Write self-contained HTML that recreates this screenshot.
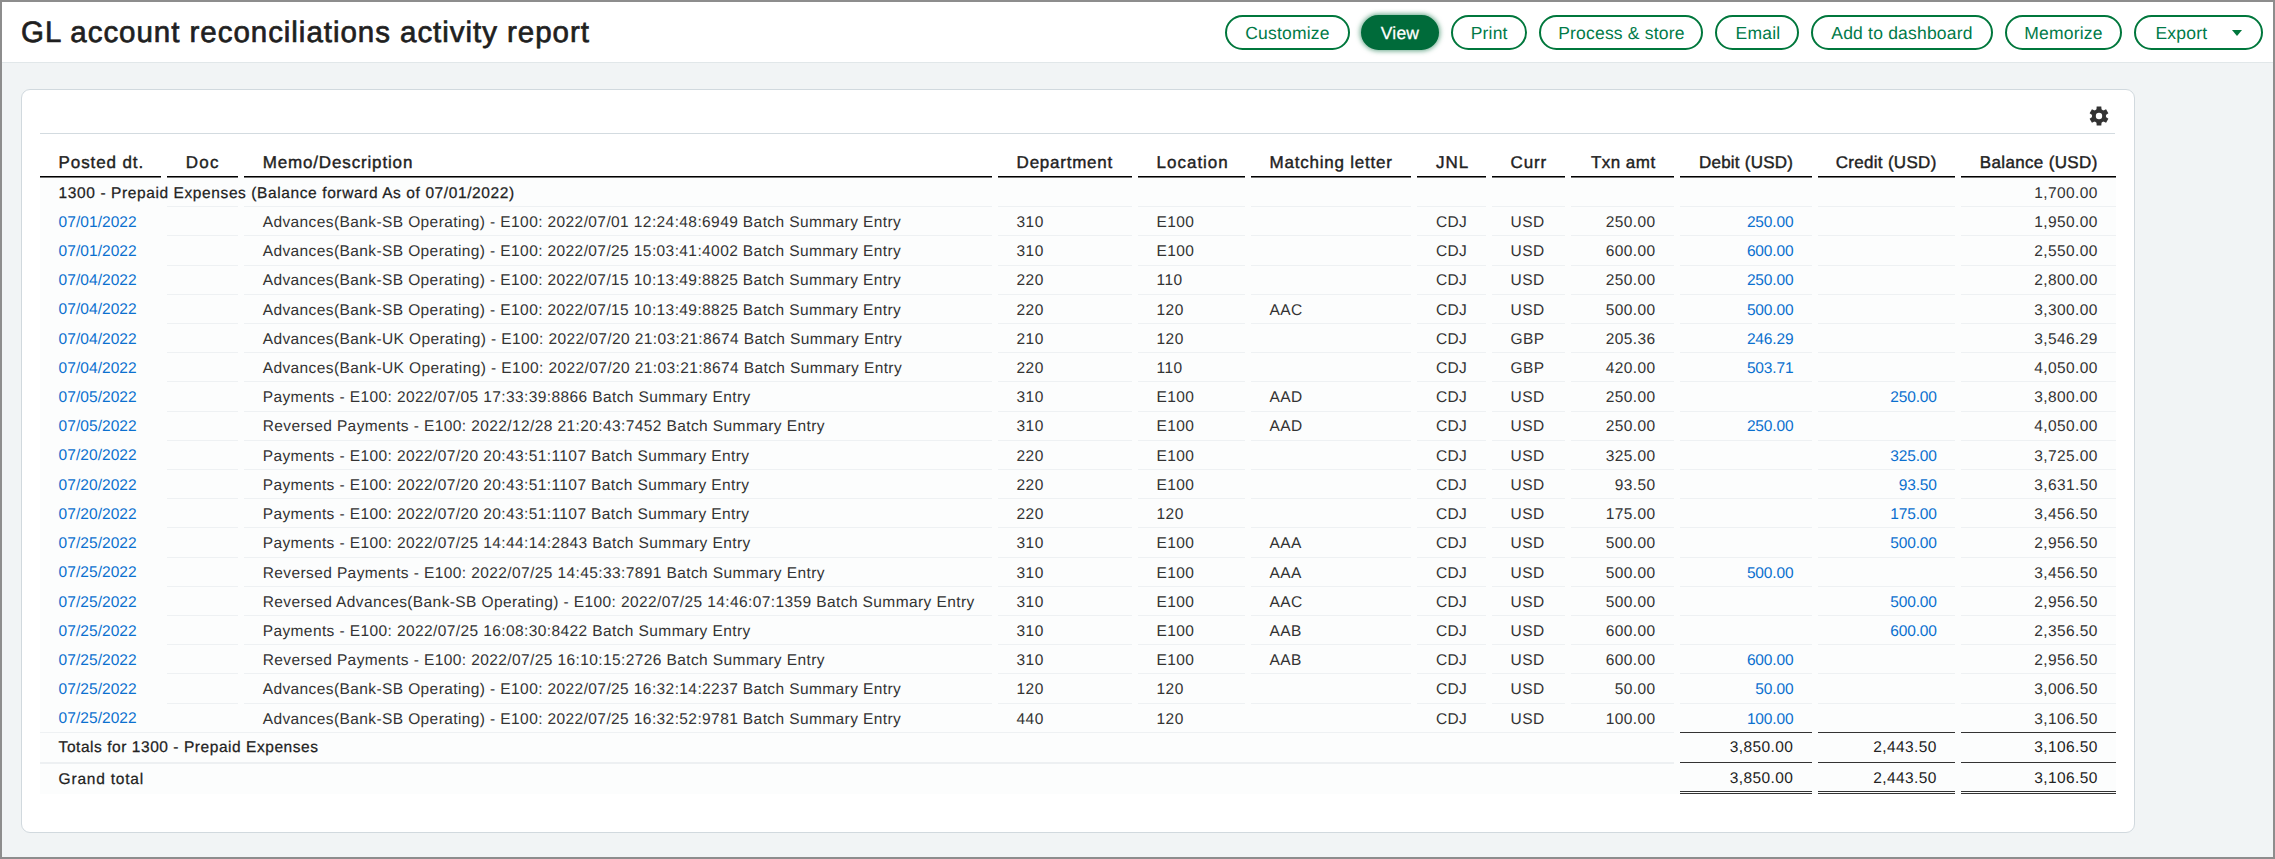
<!DOCTYPE html>
<html><head><meta charset="utf-8">
<style>
*{box-sizing:border-box;margin:0;padding:0}
html,body{width:2275px;height:859px;overflow:hidden;background:#f1f4f5;font-family:"Liberation Sans",sans-serif;text-rendering:geometricPrecision}
#frame{position:absolute;left:0;top:0;width:2275px;height:859px;border:2px solid #8d8d8d;pointer-events:none;z-index:10}
#hdr{position:absolute;left:0;top:0;width:2275px;height:63px;background:#fff;border-bottom:1px solid #e1e7e9}
#title{position:absolute;left:21px;top:15.6px;font-size:29.5px;font-weight:400;-webkit-text-stroke:0.7px #1f1f1f;letter-spacing:0.96px;color:#1f1f1f;white-space:nowrap;line-height:34px}
.btn{position:absolute;top:15px;height:35px;border:2px solid #00773c;border-radius:17.5px;color:#007a48;font-size:17.5px;line-height:33px;text-align:center;white-space:nowrap;background:#fff;letter-spacing:0.2px}
.btn.pri{background:#006b3a;border-color:#006b3a;color:#fff;-webkit-text-stroke:0.25px #fff;box-shadow:0 0 5px 1px rgba(0,107,58,.6)}
#card{position:absolute;left:21px;top:89px;width:2114px;height:744px;background:#fff;border:1px solid #d1d9de;border-radius:9px}
#topline{position:absolute;left:40px;top:133px;width:2075px;height:1px;background:#d3dbe0}
.a{position:absolute;white-space:nowrap}
.th{font-size:17px;font-weight:400;color:#222;-webkit-text-stroke:0.4px #222;top:152.6px;line-height:20px}
.ul{position:absolute;top:176px;height:1px;background:#000;box-shadow:0 1px 0 rgba(0,0,0,0.55)}
.bg{position:absolute;background:#fcfdfd}
.sep{position:absolute;height:1px;background:#eef1f3}
.td{font-size:15.5px;color:#333;line-height:17px;letter-spacing:0.4px}
.dt{letter-spacing:-0.15px}
.lk{color:#0b70cf}
.bold{color:#222;-webkit-text-stroke:0.25px #222;letter-spacing:0.6px}
.tl{position:absolute;height:1px;background:#333}
.tot{color:#222}
</style></head><body>
<div id="hdr"></div>
<div id="title">GL account reconciliations activity report</div>
<div class="btn" style="left:1225px;width:125.0px;">Customize</div>
<div class="btn pri" style="left:1361px;width:78.0px;">View</div>
<div class="btn" style="left:1451.4px;width:75.6px;">Print</div>
<div class="btn" style="left:1539.4px;width:164.1px;">Process &amp; store</div>
<div class="btn" style="left:1715px;width:84.0px;padding-left:2px;">Email</div>
<div class="btn" style="left:1811px;width:182.0px;">Add to dashboard</div>
<div class="btn" style="left:2005px;width:117.0px;">Memorize</div>
<div class="btn" style="left:2134px;width:128.5999999999999px;text-align:left;padding-left:19.5px">Export<span style="position:absolute;left:95.5px;top:13.1px;width:0;height:0;border-left:5.5px solid transparent;border-right:5.5px solid transparent;border-top:6.3px solid #00773c"></span></div>
<div id="card"></div>
<div id="topline"></div>
<svg class="a" style="left:2088.9px;top:105.8px" width="20" height="20" viewBox="-10 -10 20 20"><g fill="#333"><path transform="rotate(0)" d="M-2.3,-9.5 L2.3,-9.5 L2.6,-6 L-2.6,-6 Z"/><path transform="rotate(60)" d="M-2.3,-9.5 L2.3,-9.5 L2.6,-6 L-2.6,-6 Z"/><path transform="rotate(120)" d="M-2.3,-9.5 L2.3,-9.5 L2.6,-6 L-2.6,-6 Z"/><path transform="rotate(180)" d="M-2.3,-9.5 L2.3,-9.5 L2.6,-6 L-2.6,-6 Z"/><path transform="rotate(240)" d="M-2.3,-9.5 L2.3,-9.5 L2.6,-6 L-2.6,-6 Z"/><path transform="rotate(300)" d="M-2.3,-9.5 L2.3,-9.5 L2.6,-6 L-2.6,-6 Z"/><circle r="7.1"/></g><circle r="3.2" fill="#fff"/></svg>
<div class="a th" style="left:58.6px;letter-spacing:0.89px">Posted dt.</div>
<div class="ul" style="left:40px;width:121.00px"></div>
<div class="a th" style="left:185.79999999999998px;letter-spacing:1.2px">Doc</div>
<div class="ul" style="left:167.2px;width:70.60px"></div>
<div class="a th" style="left:262.65000000000003px;letter-spacing:0.85px">Memo/Description</div>
<div class="ul" style="left:244.05px;width:747.95px"></div>
<div class="a th" style="left:1016.6px;letter-spacing:0.76px">Department</div>
<div class="ul" style="left:998px;width:134.00px"></div>
<div class="a th" style="left:1156.6px;letter-spacing:0.98px">Location</div>
<div class="ul" style="left:1138px;width:106.70px"></div>
<div class="a th" style="left:1269.6px;letter-spacing:0.77px">Matching letter</div>
<div class="ul" style="left:1251px;width:160.00px"></div>
<div class="a th" style="left:1435.8999999999999px;letter-spacing:1.0px">JNL</div>
<div class="ul" style="left:1417.3px;width:68.70px"></div>
<div class="a th" style="left:1510.6px;letter-spacing:0.85px">Curr</div>
<div class="ul" style="left:1492px;width:72.70px"></div>
<div class="a th" style="right:619.45px;letter-spacing:0.45px">Txn amt</div>
<div class="ul" style="left:1571px;width:102.80px"></div>
<div class="a th" style="right:481.87px;letter-spacing:0.23px">Debit (USD)</div>
<div class="ul" style="left:1680px;width:131.60px"></div>
<div class="a th" style="right:338.40px;letter-spacing:0.3px">Credit (USD)</div>
<div class="ul" style="left:1818px;width:137.00px"></div>
<div class="a th" style="right:177.36px;letter-spacing:0.34px">Balance (USD)</div>
<div class="ul" style="left:1961px;width:155.00px"></div>
<div class="bg" style="left:40px;top:177.5px;width:2076px;height:616.0px"></div>
<div class="a td bold" style="left:58.60px;top:185.00px;">1300 - Prepaid Expenses (Balance forward As of 07/01/2022)</div>
<div class="a td" style="right:177.30px;top:185.00px;">1,700.00</div>
<div class="sep" style="left:167.2px;top:206px;width:70.60px"></div>
<div class="sep" style="left:244.05px;top:206px;width:747.95px"></div>
<div class="sep" style="left:998px;top:206px;width:134.00px"></div>
<div class="sep" style="left:1138px;top:206px;width:106.70px"></div>
<div class="sep" style="left:1251px;top:206px;width:160.00px"></div>
<div class="sep" style="left:1417.3px;top:206px;width:68.70px"></div>
<div class="sep" style="left:1492px;top:206px;width:72.70px"></div>
<div class="sep" style="left:1571px;top:206px;width:102.80px"></div>
<div class="sep" style="left:1680px;top:206px;width:131.60px"></div>
<div class="sep" style="left:1818px;top:206px;width:137.00px"></div>
<div class="sep" style="left:1961px;top:206px;width:155.00px"></div>
<div class="a td lk" style="left:58.60px;top:213.80px;letter-spacing:0.05px">07/01/2022</div>
<div class="a td" style="left:262.65px;top:214.00px;">Advances(Bank-SB Operating) - E100: 2022/07/01 12:24:48:6949 Batch Summary Entry</div>
<div class="a td" style="left:1016.60px;top:214.00px;">310</div>
<div class="a td" style="left:1156.60px;top:214.00px;">E100</div>
<div class="a td" style="left:1435.90px;top:214.00px;">CDJ</div>
<div class="a td" style="left:1510.60px;top:214.00px;">USD</div>
<div class="a td" style="right:619.50px;top:214.00px;">250.00</div>
<div class="a td lk dt" style="right:481.60px;top:214.00px;">250.00</div>
<div class="a td" style="right:177.30px;top:214.00px;">1,950.00</div>
<div class="sep" style="left:167.2px;top:235px;width:70.60px"></div>
<div class="sep" style="left:244.05px;top:235px;width:747.95px"></div>
<div class="sep" style="left:998px;top:235px;width:134.00px"></div>
<div class="sep" style="left:1138px;top:235px;width:106.70px"></div>
<div class="sep" style="left:1251px;top:235px;width:160.00px"></div>
<div class="sep" style="left:1417.3px;top:235px;width:68.70px"></div>
<div class="sep" style="left:1492px;top:235px;width:72.70px"></div>
<div class="sep" style="left:1571px;top:235px;width:102.80px"></div>
<div class="sep" style="left:1680px;top:235px;width:131.60px"></div>
<div class="sep" style="left:1818px;top:235px;width:137.00px"></div>
<div class="sep" style="left:1961px;top:235px;width:155.00px"></div>
<div class="a td lk" style="left:58.60px;top:243.01px;letter-spacing:0.05px">07/01/2022</div>
<div class="a td" style="left:262.65px;top:243.21px;">Advances(Bank-SB Operating) - E100: 2022/07/25 15:03:41:4002 Batch Summary Entry</div>
<div class="a td" style="left:1016.60px;top:243.21px;">310</div>
<div class="a td" style="left:1156.60px;top:243.21px;">E100</div>
<div class="a td" style="left:1435.90px;top:243.21px;">CDJ</div>
<div class="a td" style="left:1510.60px;top:243.21px;">USD</div>
<div class="a td" style="right:619.50px;top:243.21px;">600.00</div>
<div class="a td lk dt" style="right:481.60px;top:243.21px;">600.00</div>
<div class="a td" style="right:177.30px;top:243.21px;">2,550.00</div>
<div class="sep" style="left:167.2px;top:265px;width:70.60px"></div>
<div class="sep" style="left:244.05px;top:265px;width:747.95px"></div>
<div class="sep" style="left:998px;top:265px;width:134.00px"></div>
<div class="sep" style="left:1138px;top:265px;width:106.70px"></div>
<div class="sep" style="left:1251px;top:265px;width:160.00px"></div>
<div class="sep" style="left:1417.3px;top:265px;width:68.70px"></div>
<div class="sep" style="left:1492px;top:265px;width:72.70px"></div>
<div class="sep" style="left:1571px;top:265px;width:102.80px"></div>
<div class="sep" style="left:1680px;top:265px;width:131.60px"></div>
<div class="sep" style="left:1818px;top:265px;width:137.00px"></div>
<div class="sep" style="left:1961px;top:265px;width:155.00px"></div>
<div class="a td lk" style="left:58.60px;top:272.22px;letter-spacing:0.05px">07/04/2022</div>
<div class="a td" style="left:262.65px;top:272.42px;">Advances(Bank-SB Operating) - E100: 2022/07/15 10:13:49:8825 Batch Summary Entry</div>
<div class="a td" style="left:1016.60px;top:272.42px;">220</div>
<div class="a td" style="left:1156.60px;top:272.42px;">110</div>
<div class="a td" style="left:1435.90px;top:272.42px;">CDJ</div>
<div class="a td" style="left:1510.60px;top:272.42px;">USD</div>
<div class="a td" style="right:619.50px;top:272.42px;">250.00</div>
<div class="a td lk dt" style="right:481.60px;top:272.42px;">250.00</div>
<div class="a td" style="right:177.30px;top:272.42px;">2,800.00</div>
<div class="sep" style="left:167.2px;top:294px;width:70.60px"></div>
<div class="sep" style="left:244.05px;top:294px;width:747.95px"></div>
<div class="sep" style="left:998px;top:294px;width:134.00px"></div>
<div class="sep" style="left:1138px;top:294px;width:106.70px"></div>
<div class="sep" style="left:1251px;top:294px;width:160.00px"></div>
<div class="sep" style="left:1417.3px;top:294px;width:68.70px"></div>
<div class="sep" style="left:1492px;top:294px;width:72.70px"></div>
<div class="sep" style="left:1571px;top:294px;width:102.80px"></div>
<div class="sep" style="left:1680px;top:294px;width:131.60px"></div>
<div class="sep" style="left:1818px;top:294px;width:137.00px"></div>
<div class="sep" style="left:1961px;top:294px;width:155.00px"></div>
<div class="a td lk" style="left:58.60px;top:301.43px;letter-spacing:0.05px">07/04/2022</div>
<div class="a td" style="left:262.65px;top:301.63px;">Advances(Bank-SB Operating) - E100: 2022/07/15 10:13:49:8825 Batch Summary Entry</div>
<div class="a td" style="left:1016.60px;top:301.63px;">220</div>
<div class="a td" style="left:1156.60px;top:301.63px;">120</div>
<div class="a td" style="left:1269.60px;top:301.63px;">AAC</div>
<div class="a td" style="left:1435.90px;top:301.63px;">CDJ</div>
<div class="a td" style="left:1510.60px;top:301.63px;">USD</div>
<div class="a td" style="right:619.50px;top:301.63px;">500.00</div>
<div class="a td lk dt" style="right:481.60px;top:301.63px;">500.00</div>
<div class="a td" style="right:177.30px;top:301.63px;">3,300.00</div>
<div class="sep" style="left:167.2px;top:323px;width:70.60px"></div>
<div class="sep" style="left:244.05px;top:323px;width:747.95px"></div>
<div class="sep" style="left:998px;top:323px;width:134.00px"></div>
<div class="sep" style="left:1138px;top:323px;width:106.70px"></div>
<div class="sep" style="left:1251px;top:323px;width:160.00px"></div>
<div class="sep" style="left:1417.3px;top:323px;width:68.70px"></div>
<div class="sep" style="left:1492px;top:323px;width:72.70px"></div>
<div class="sep" style="left:1571px;top:323px;width:102.80px"></div>
<div class="sep" style="left:1680px;top:323px;width:131.60px"></div>
<div class="sep" style="left:1818px;top:323px;width:137.00px"></div>
<div class="sep" style="left:1961px;top:323px;width:155.00px"></div>
<div class="a td lk" style="left:58.60px;top:330.64px;letter-spacing:0.05px">07/04/2022</div>
<div class="a td" style="left:262.65px;top:330.84px;">Advances(Bank-UK Operating) - E100: 2022/07/20 21:03:21:8674 Batch Summary Entry</div>
<div class="a td" style="left:1016.60px;top:330.84px;">210</div>
<div class="a td" style="left:1156.60px;top:330.84px;">120</div>
<div class="a td" style="left:1435.90px;top:330.84px;">CDJ</div>
<div class="a td" style="left:1510.60px;top:330.84px;">GBP</div>
<div class="a td" style="right:619.50px;top:330.84px;">205.36</div>
<div class="a td lk dt" style="right:481.60px;top:330.84px;">246.29</div>
<div class="a td" style="right:177.30px;top:330.84px;">3,546.29</div>
<div class="sep" style="left:167.2px;top:352px;width:70.60px"></div>
<div class="sep" style="left:244.05px;top:352px;width:747.95px"></div>
<div class="sep" style="left:998px;top:352px;width:134.00px"></div>
<div class="sep" style="left:1138px;top:352px;width:106.70px"></div>
<div class="sep" style="left:1251px;top:352px;width:160.00px"></div>
<div class="sep" style="left:1417.3px;top:352px;width:68.70px"></div>
<div class="sep" style="left:1492px;top:352px;width:72.70px"></div>
<div class="sep" style="left:1571px;top:352px;width:102.80px"></div>
<div class="sep" style="left:1680px;top:352px;width:131.60px"></div>
<div class="sep" style="left:1818px;top:352px;width:137.00px"></div>
<div class="sep" style="left:1961px;top:352px;width:155.00px"></div>
<div class="a td lk" style="left:58.60px;top:359.85px;letter-spacing:0.05px">07/04/2022</div>
<div class="a td" style="left:262.65px;top:360.05px;">Advances(Bank-UK Operating) - E100: 2022/07/20 21:03:21:8674 Batch Summary Entry</div>
<div class="a td" style="left:1016.60px;top:360.05px;">220</div>
<div class="a td" style="left:1156.60px;top:360.05px;">110</div>
<div class="a td" style="left:1435.90px;top:360.05px;">CDJ</div>
<div class="a td" style="left:1510.60px;top:360.05px;">GBP</div>
<div class="a td" style="right:619.50px;top:360.05px;">420.00</div>
<div class="a td lk dt" style="right:481.60px;top:360.05px;">503.71</div>
<div class="a td" style="right:177.30px;top:360.05px;">4,050.00</div>
<div class="sep" style="left:167.2px;top:381px;width:70.60px"></div>
<div class="sep" style="left:244.05px;top:381px;width:747.95px"></div>
<div class="sep" style="left:998px;top:381px;width:134.00px"></div>
<div class="sep" style="left:1138px;top:381px;width:106.70px"></div>
<div class="sep" style="left:1251px;top:381px;width:160.00px"></div>
<div class="sep" style="left:1417.3px;top:381px;width:68.70px"></div>
<div class="sep" style="left:1492px;top:381px;width:72.70px"></div>
<div class="sep" style="left:1571px;top:381px;width:102.80px"></div>
<div class="sep" style="left:1680px;top:381px;width:131.60px"></div>
<div class="sep" style="left:1818px;top:381px;width:137.00px"></div>
<div class="sep" style="left:1961px;top:381px;width:155.00px"></div>
<div class="a td lk" style="left:58.60px;top:389.06px;letter-spacing:0.05px">07/05/2022</div>
<div class="a td" style="left:262.65px;top:389.26px;">Payments - E100: 2022/07/05 17:33:39:8866 Batch Summary Entry</div>
<div class="a td" style="left:1016.60px;top:389.26px;">310</div>
<div class="a td" style="left:1156.60px;top:389.26px;">E100</div>
<div class="a td" style="left:1269.60px;top:389.26px;">AAD</div>
<div class="a td" style="left:1435.90px;top:389.26px;">CDJ</div>
<div class="a td" style="left:1510.60px;top:389.26px;">USD</div>
<div class="a td" style="right:619.50px;top:389.26px;">250.00</div>
<div class="a td lk dt" style="right:338.20px;top:389.26px;">250.00</div>
<div class="a td" style="right:177.30px;top:389.26px;">3,800.00</div>
<div class="sep" style="left:167.2px;top:411px;width:70.60px"></div>
<div class="sep" style="left:244.05px;top:411px;width:747.95px"></div>
<div class="sep" style="left:998px;top:411px;width:134.00px"></div>
<div class="sep" style="left:1138px;top:411px;width:106.70px"></div>
<div class="sep" style="left:1251px;top:411px;width:160.00px"></div>
<div class="sep" style="left:1417.3px;top:411px;width:68.70px"></div>
<div class="sep" style="left:1492px;top:411px;width:72.70px"></div>
<div class="sep" style="left:1571px;top:411px;width:102.80px"></div>
<div class="sep" style="left:1680px;top:411px;width:131.60px"></div>
<div class="sep" style="left:1818px;top:411px;width:137.00px"></div>
<div class="sep" style="left:1961px;top:411px;width:155.00px"></div>
<div class="a td lk" style="left:58.60px;top:418.27px;letter-spacing:0.05px">07/05/2022</div>
<div class="a td" style="left:262.65px;top:418.47px;">Reversed Payments - E100: 2022/12/28 21:20:43:7452 Batch Summary Entry</div>
<div class="a td" style="left:1016.60px;top:418.47px;">310</div>
<div class="a td" style="left:1156.60px;top:418.47px;">E100</div>
<div class="a td" style="left:1269.60px;top:418.47px;">AAD</div>
<div class="a td" style="left:1435.90px;top:418.47px;">CDJ</div>
<div class="a td" style="left:1510.60px;top:418.47px;">USD</div>
<div class="a td" style="right:619.50px;top:418.47px;">250.00</div>
<div class="a td lk dt" style="right:481.60px;top:418.47px;">250.00</div>
<div class="a td" style="right:177.30px;top:418.47px;">4,050.00</div>
<div class="sep" style="left:167.2px;top:440px;width:70.60px"></div>
<div class="sep" style="left:244.05px;top:440px;width:747.95px"></div>
<div class="sep" style="left:998px;top:440px;width:134.00px"></div>
<div class="sep" style="left:1138px;top:440px;width:106.70px"></div>
<div class="sep" style="left:1251px;top:440px;width:160.00px"></div>
<div class="sep" style="left:1417.3px;top:440px;width:68.70px"></div>
<div class="sep" style="left:1492px;top:440px;width:72.70px"></div>
<div class="sep" style="left:1571px;top:440px;width:102.80px"></div>
<div class="sep" style="left:1680px;top:440px;width:131.60px"></div>
<div class="sep" style="left:1818px;top:440px;width:137.00px"></div>
<div class="sep" style="left:1961px;top:440px;width:155.00px"></div>
<div class="a td lk" style="left:58.60px;top:447.48px;letter-spacing:0.05px">07/20/2022</div>
<div class="a td" style="left:262.65px;top:447.68px;">Payments - E100: 2022/07/20 20:43:51:1107 Batch Summary Entry</div>
<div class="a td" style="left:1016.60px;top:447.68px;">220</div>
<div class="a td" style="left:1156.60px;top:447.68px;">E100</div>
<div class="a td" style="left:1435.90px;top:447.68px;">CDJ</div>
<div class="a td" style="left:1510.60px;top:447.68px;">USD</div>
<div class="a td" style="right:619.50px;top:447.68px;">325.00</div>
<div class="a td lk dt" style="right:338.20px;top:447.68px;">325.00</div>
<div class="a td" style="right:177.30px;top:447.68px;">3,725.00</div>
<div class="sep" style="left:167.2px;top:469px;width:70.60px"></div>
<div class="sep" style="left:244.05px;top:469px;width:747.95px"></div>
<div class="sep" style="left:998px;top:469px;width:134.00px"></div>
<div class="sep" style="left:1138px;top:469px;width:106.70px"></div>
<div class="sep" style="left:1251px;top:469px;width:160.00px"></div>
<div class="sep" style="left:1417.3px;top:469px;width:68.70px"></div>
<div class="sep" style="left:1492px;top:469px;width:72.70px"></div>
<div class="sep" style="left:1571px;top:469px;width:102.80px"></div>
<div class="sep" style="left:1680px;top:469px;width:131.60px"></div>
<div class="sep" style="left:1818px;top:469px;width:137.00px"></div>
<div class="sep" style="left:1961px;top:469px;width:155.00px"></div>
<div class="a td lk" style="left:58.60px;top:476.69px;letter-spacing:0.05px">07/20/2022</div>
<div class="a td" style="left:262.65px;top:476.89px;">Payments - E100: 2022/07/20 20:43:51:1107 Batch Summary Entry</div>
<div class="a td" style="left:1016.60px;top:476.89px;">220</div>
<div class="a td" style="left:1156.60px;top:476.89px;">E100</div>
<div class="a td" style="left:1435.90px;top:476.89px;">CDJ</div>
<div class="a td" style="left:1510.60px;top:476.89px;">USD</div>
<div class="a td" style="right:619.50px;top:476.89px;">93.50</div>
<div class="a td lk dt" style="right:338.20px;top:476.89px;">93.50</div>
<div class="a td" style="right:177.30px;top:476.89px;">3,631.50</div>
<div class="sep" style="left:167.2px;top:498px;width:70.60px"></div>
<div class="sep" style="left:244.05px;top:498px;width:747.95px"></div>
<div class="sep" style="left:998px;top:498px;width:134.00px"></div>
<div class="sep" style="left:1138px;top:498px;width:106.70px"></div>
<div class="sep" style="left:1251px;top:498px;width:160.00px"></div>
<div class="sep" style="left:1417.3px;top:498px;width:68.70px"></div>
<div class="sep" style="left:1492px;top:498px;width:72.70px"></div>
<div class="sep" style="left:1571px;top:498px;width:102.80px"></div>
<div class="sep" style="left:1680px;top:498px;width:131.60px"></div>
<div class="sep" style="left:1818px;top:498px;width:137.00px"></div>
<div class="sep" style="left:1961px;top:498px;width:155.00px"></div>
<div class="a td lk" style="left:58.60px;top:505.90px;letter-spacing:0.05px">07/20/2022</div>
<div class="a td" style="left:262.65px;top:506.10px;">Payments - E100: 2022/07/20 20:43:51:1107 Batch Summary Entry</div>
<div class="a td" style="left:1016.60px;top:506.10px;">220</div>
<div class="a td" style="left:1156.60px;top:506.10px;">120</div>
<div class="a td" style="left:1435.90px;top:506.10px;">CDJ</div>
<div class="a td" style="left:1510.60px;top:506.10px;">USD</div>
<div class="a td" style="right:619.50px;top:506.10px;">175.00</div>
<div class="a td lk dt" style="right:338.20px;top:506.10px;">175.00</div>
<div class="a td" style="right:177.30px;top:506.10px;">3,456.50</div>
<div class="sep" style="left:167.2px;top:527px;width:70.60px"></div>
<div class="sep" style="left:244.05px;top:527px;width:747.95px"></div>
<div class="sep" style="left:998px;top:527px;width:134.00px"></div>
<div class="sep" style="left:1138px;top:527px;width:106.70px"></div>
<div class="sep" style="left:1251px;top:527px;width:160.00px"></div>
<div class="sep" style="left:1417.3px;top:527px;width:68.70px"></div>
<div class="sep" style="left:1492px;top:527px;width:72.70px"></div>
<div class="sep" style="left:1571px;top:527px;width:102.80px"></div>
<div class="sep" style="left:1680px;top:527px;width:131.60px"></div>
<div class="sep" style="left:1818px;top:527px;width:137.00px"></div>
<div class="sep" style="left:1961px;top:527px;width:155.00px"></div>
<div class="a td lk" style="left:58.60px;top:535.11px;letter-spacing:0.05px">07/25/2022</div>
<div class="a td" style="left:262.65px;top:535.31px;">Payments - E100: 2022/07/25 14:44:14:2843 Batch Summary Entry</div>
<div class="a td" style="left:1016.60px;top:535.31px;">310</div>
<div class="a td" style="left:1156.60px;top:535.31px;">E100</div>
<div class="a td" style="left:1269.60px;top:535.31px;">AAA</div>
<div class="a td" style="left:1435.90px;top:535.31px;">CDJ</div>
<div class="a td" style="left:1510.60px;top:535.31px;">USD</div>
<div class="a td" style="right:619.50px;top:535.31px;">500.00</div>
<div class="a td lk dt" style="right:338.20px;top:535.31px;">500.00</div>
<div class="a td" style="right:177.30px;top:535.31px;">2,956.50</div>
<div class="sep" style="left:167.2px;top:557px;width:70.60px"></div>
<div class="sep" style="left:244.05px;top:557px;width:747.95px"></div>
<div class="sep" style="left:998px;top:557px;width:134.00px"></div>
<div class="sep" style="left:1138px;top:557px;width:106.70px"></div>
<div class="sep" style="left:1251px;top:557px;width:160.00px"></div>
<div class="sep" style="left:1417.3px;top:557px;width:68.70px"></div>
<div class="sep" style="left:1492px;top:557px;width:72.70px"></div>
<div class="sep" style="left:1571px;top:557px;width:102.80px"></div>
<div class="sep" style="left:1680px;top:557px;width:131.60px"></div>
<div class="sep" style="left:1818px;top:557px;width:137.00px"></div>
<div class="sep" style="left:1961px;top:557px;width:155.00px"></div>
<div class="a td lk" style="left:58.60px;top:564.32px;letter-spacing:0.05px">07/25/2022</div>
<div class="a td" style="left:262.65px;top:564.52px;">Reversed Payments - E100: 2022/07/25 14:45:33:7891 Batch Summary Entry</div>
<div class="a td" style="left:1016.60px;top:564.52px;">310</div>
<div class="a td" style="left:1156.60px;top:564.52px;">E100</div>
<div class="a td" style="left:1269.60px;top:564.52px;">AAA</div>
<div class="a td" style="left:1435.90px;top:564.52px;">CDJ</div>
<div class="a td" style="left:1510.60px;top:564.52px;">USD</div>
<div class="a td" style="right:619.50px;top:564.52px;">500.00</div>
<div class="a td lk dt" style="right:481.60px;top:564.52px;">500.00</div>
<div class="a td" style="right:177.30px;top:564.52px;">3,456.50</div>
<div class="sep" style="left:167.2px;top:586px;width:70.60px"></div>
<div class="sep" style="left:244.05px;top:586px;width:747.95px"></div>
<div class="sep" style="left:998px;top:586px;width:134.00px"></div>
<div class="sep" style="left:1138px;top:586px;width:106.70px"></div>
<div class="sep" style="left:1251px;top:586px;width:160.00px"></div>
<div class="sep" style="left:1417.3px;top:586px;width:68.70px"></div>
<div class="sep" style="left:1492px;top:586px;width:72.70px"></div>
<div class="sep" style="left:1571px;top:586px;width:102.80px"></div>
<div class="sep" style="left:1680px;top:586px;width:131.60px"></div>
<div class="sep" style="left:1818px;top:586px;width:137.00px"></div>
<div class="sep" style="left:1961px;top:586px;width:155.00px"></div>
<div class="a td lk" style="left:58.60px;top:593.53px;letter-spacing:0.05px">07/25/2022</div>
<div class="a td" style="left:262.65px;top:593.73px;">Reversed Advances(Bank-SB Operating) - E100: 2022/07/25 14:46:07:1359 Batch Summary Entry</div>
<div class="a td" style="left:1016.60px;top:593.73px;">310</div>
<div class="a td" style="left:1156.60px;top:593.73px;">E100</div>
<div class="a td" style="left:1269.60px;top:593.73px;">AAC</div>
<div class="a td" style="left:1435.90px;top:593.73px;">CDJ</div>
<div class="a td" style="left:1510.60px;top:593.73px;">USD</div>
<div class="a td" style="right:619.50px;top:593.73px;">500.00</div>
<div class="a td lk dt" style="right:338.20px;top:593.73px;">500.00</div>
<div class="a td" style="right:177.30px;top:593.73px;">2,956.50</div>
<div class="sep" style="left:167.2px;top:615px;width:70.60px"></div>
<div class="sep" style="left:244.05px;top:615px;width:747.95px"></div>
<div class="sep" style="left:998px;top:615px;width:134.00px"></div>
<div class="sep" style="left:1138px;top:615px;width:106.70px"></div>
<div class="sep" style="left:1251px;top:615px;width:160.00px"></div>
<div class="sep" style="left:1417.3px;top:615px;width:68.70px"></div>
<div class="sep" style="left:1492px;top:615px;width:72.70px"></div>
<div class="sep" style="left:1571px;top:615px;width:102.80px"></div>
<div class="sep" style="left:1680px;top:615px;width:131.60px"></div>
<div class="sep" style="left:1818px;top:615px;width:137.00px"></div>
<div class="sep" style="left:1961px;top:615px;width:155.00px"></div>
<div class="a td lk" style="left:58.60px;top:622.74px;letter-spacing:0.05px">07/25/2022</div>
<div class="a td" style="left:262.65px;top:622.94px;">Payments - E100: 2022/07/25 16:08:30:8422 Batch Summary Entry</div>
<div class="a td" style="left:1016.60px;top:622.94px;">310</div>
<div class="a td" style="left:1156.60px;top:622.94px;">E100</div>
<div class="a td" style="left:1269.60px;top:622.94px;">AAB</div>
<div class="a td" style="left:1435.90px;top:622.94px;">CDJ</div>
<div class="a td" style="left:1510.60px;top:622.94px;">USD</div>
<div class="a td" style="right:619.50px;top:622.94px;">600.00</div>
<div class="a td lk dt" style="right:338.20px;top:622.94px;">600.00</div>
<div class="a td" style="right:177.30px;top:622.94px;">2,356.50</div>
<div class="sep" style="left:167.2px;top:644px;width:70.60px"></div>
<div class="sep" style="left:244.05px;top:644px;width:747.95px"></div>
<div class="sep" style="left:998px;top:644px;width:134.00px"></div>
<div class="sep" style="left:1138px;top:644px;width:106.70px"></div>
<div class="sep" style="left:1251px;top:644px;width:160.00px"></div>
<div class="sep" style="left:1417.3px;top:644px;width:68.70px"></div>
<div class="sep" style="left:1492px;top:644px;width:72.70px"></div>
<div class="sep" style="left:1571px;top:644px;width:102.80px"></div>
<div class="sep" style="left:1680px;top:644px;width:131.60px"></div>
<div class="sep" style="left:1818px;top:644px;width:137.00px"></div>
<div class="sep" style="left:1961px;top:644px;width:155.00px"></div>
<div class="a td lk" style="left:58.60px;top:651.95px;letter-spacing:0.05px">07/25/2022</div>
<div class="a td" style="left:262.65px;top:652.15px;">Reversed Payments - E100: 2022/07/25 16:10:15:2726 Batch Summary Entry</div>
<div class="a td" style="left:1016.60px;top:652.15px;">310</div>
<div class="a td" style="left:1156.60px;top:652.15px;">E100</div>
<div class="a td" style="left:1269.60px;top:652.15px;">AAB</div>
<div class="a td" style="left:1435.90px;top:652.15px;">CDJ</div>
<div class="a td" style="left:1510.60px;top:652.15px;">USD</div>
<div class="a td" style="right:619.50px;top:652.15px;">600.00</div>
<div class="a td lk dt" style="right:481.60px;top:652.15px;">600.00</div>
<div class="a td" style="right:177.30px;top:652.15px;">2,956.50</div>
<div class="sep" style="left:167.2px;top:673px;width:70.60px"></div>
<div class="sep" style="left:244.05px;top:673px;width:747.95px"></div>
<div class="sep" style="left:998px;top:673px;width:134.00px"></div>
<div class="sep" style="left:1138px;top:673px;width:106.70px"></div>
<div class="sep" style="left:1251px;top:673px;width:160.00px"></div>
<div class="sep" style="left:1417.3px;top:673px;width:68.70px"></div>
<div class="sep" style="left:1492px;top:673px;width:72.70px"></div>
<div class="sep" style="left:1571px;top:673px;width:102.80px"></div>
<div class="sep" style="left:1680px;top:673px;width:131.60px"></div>
<div class="sep" style="left:1818px;top:673px;width:137.00px"></div>
<div class="sep" style="left:1961px;top:673px;width:155.00px"></div>
<div class="a td lk" style="left:58.60px;top:681.16px;letter-spacing:0.05px">07/25/2022</div>
<div class="a td" style="left:262.65px;top:681.36px;">Advances(Bank-SB Operating) - E100: 2022/07/25 16:32:14:2237 Batch Summary Entry</div>
<div class="a td" style="left:1016.60px;top:681.36px;">120</div>
<div class="a td" style="left:1156.60px;top:681.36px;">120</div>
<div class="a td" style="left:1435.90px;top:681.36px;">CDJ</div>
<div class="a td" style="left:1510.60px;top:681.36px;">USD</div>
<div class="a td" style="right:619.50px;top:681.36px;">50.00</div>
<div class="a td lk dt" style="right:481.60px;top:681.36px;">50.00</div>
<div class="a td" style="right:177.30px;top:681.36px;">3,006.50</div>
<div class="sep" style="left:167.2px;top:703px;width:70.60px"></div>
<div class="sep" style="left:244.05px;top:703px;width:747.95px"></div>
<div class="sep" style="left:998px;top:703px;width:134.00px"></div>
<div class="sep" style="left:1138px;top:703px;width:106.70px"></div>
<div class="sep" style="left:1251px;top:703px;width:160.00px"></div>
<div class="sep" style="left:1417.3px;top:703px;width:68.70px"></div>
<div class="sep" style="left:1492px;top:703px;width:72.70px"></div>
<div class="sep" style="left:1571px;top:703px;width:102.80px"></div>
<div class="sep" style="left:1680px;top:703px;width:131.60px"></div>
<div class="sep" style="left:1818px;top:703px;width:137.00px"></div>
<div class="sep" style="left:1961px;top:703px;width:155.00px"></div>
<div class="a td lk" style="left:58.60px;top:710.37px;letter-spacing:0.05px">07/25/2022</div>
<div class="a td" style="left:262.65px;top:710.57px;">Advances(Bank-SB Operating) - E100: 2022/07/25 16:32:52:9781 Batch Summary Entry</div>
<div class="a td" style="left:1016.60px;top:710.57px;">440</div>
<div class="a td" style="left:1156.60px;top:710.57px;">120</div>
<div class="a td" style="left:1435.90px;top:710.57px;">CDJ</div>
<div class="a td" style="left:1510.60px;top:710.57px;">USD</div>
<div class="a td" style="right:619.50px;top:710.57px;">100.00</div>
<div class="a td lk dt" style="right:481.60px;top:710.57px;">100.00</div>
<div class="a td" style="right:177.30px;top:710.57px;">3,106.50</div>
<div class="tl" style="left:1680px;top:732px;width:131.60px"></div>
<div class="tl" style="left:1680px;top:762px;width:131.60px"></div>
<div class="tl" style="left:1680px;top:791px;width:131.60px"></div>
<div class="tl" style="left:1680px;top:793px;width:131.60px"></div>
<div class="tl" style="left:1818px;top:732px;width:137.00px"></div>
<div class="tl" style="left:1818px;top:762px;width:137.00px"></div>
<div class="tl" style="left:1818px;top:791px;width:137.00px"></div>
<div class="tl" style="left:1818px;top:793px;width:137.00px"></div>
<div class="tl" style="left:1961px;top:732px;width:155.00px"></div>
<div class="tl" style="left:1961px;top:762px;width:155.00px"></div>
<div class="tl" style="left:1961px;top:791px;width:155.00px"></div>
<div class="tl" style="left:1961px;top:793px;width:155.00px"></div>
<div class="sep" style="left:40px;top:732px;width:1634px"></div>
<div class="sep" style="left:40px;top:761.5px;width:1634px;height:2px;background:#edf0f2"></div>
<div class="a td bold" style="left:58.60px;top:739.00px;letter-spacing:0.55px">Totals for 1300 - Prepaid Expenses</div>
<div class="a td bold" style="left:58.60px;top:771.30px;letter-spacing:0.79px">Grand total</div>
<div class="a td tot" style="right:481.70px;top:739.00px;">3,850.00</div>
<div class="a td tot" style="right:481.70px;top:770.00px;">3,850.00</div>
<div class="a td tot" style="right:338.30px;top:739.00px;">2,443.50</div>
<div class="a td tot" style="right:338.30px;top:770.00px;">2,443.50</div>
<div class="a td tot" style="right:177.30px;top:739.00px;">3,106.50</div>
<div class="a td tot" style="right:177.30px;top:770.00px;">3,106.50</div>
<div id="frame"></div>
</body></html>
